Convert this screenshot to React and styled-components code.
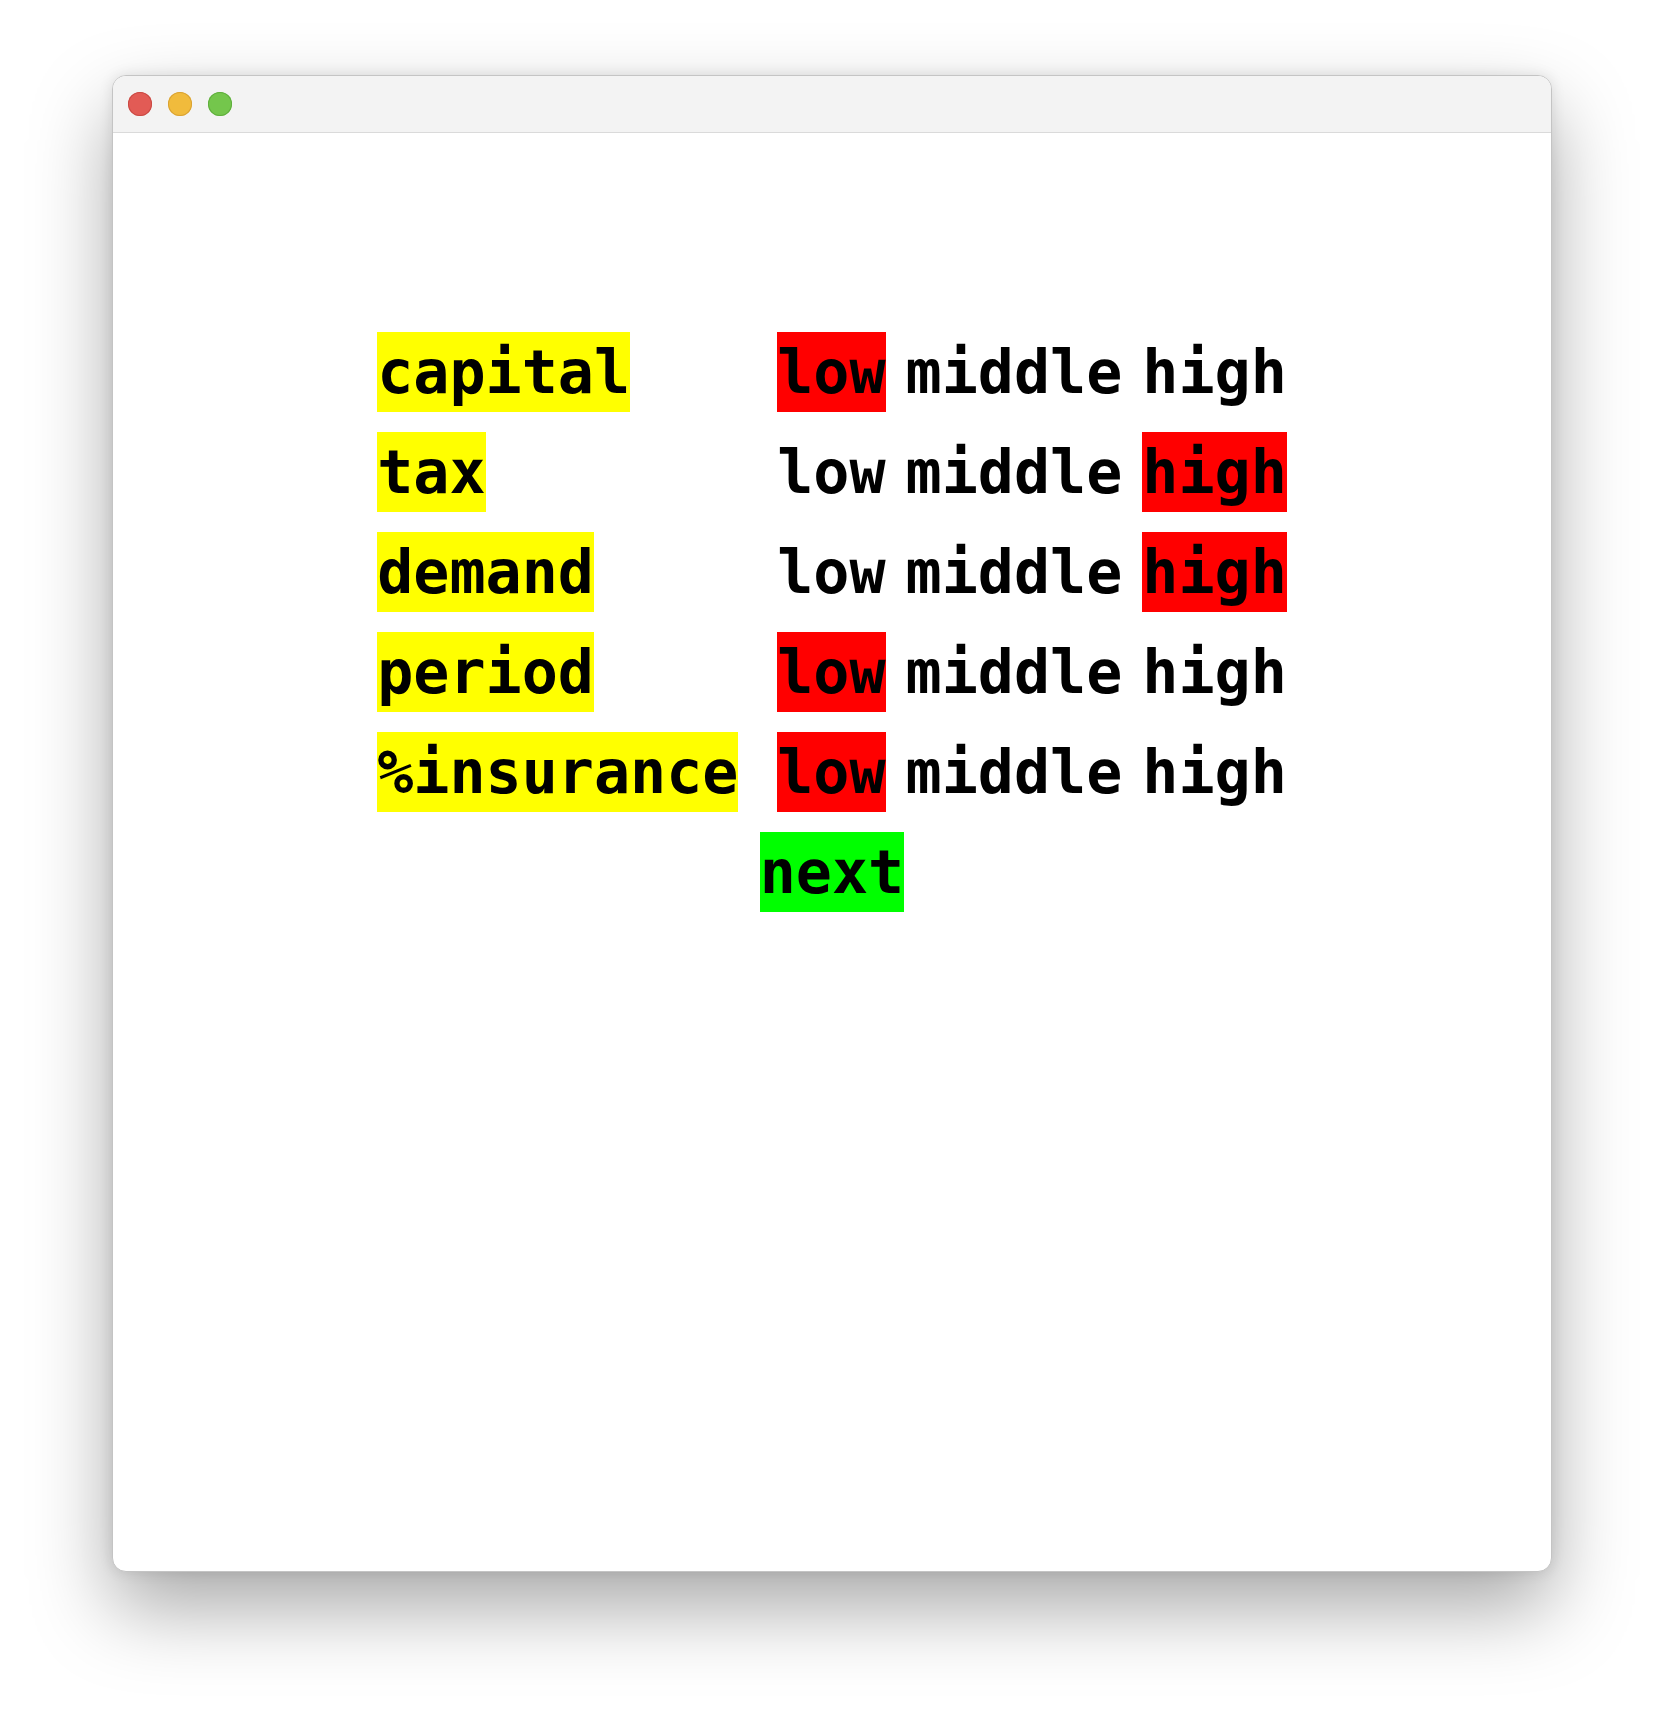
import styled, { createGlobalStyle } from "styled-components";

const GlobalStyle = createGlobalStyle`
  html, body {
    margin: 0;
    padding: 0;
    background: #ffffff;
  }
  body {
    padding: 75px 0 148px;
    font-family: "DejaVu Sans Mono", "Liberation Mono", monospace;
  }
`;

const settings = [
  { name: "capital", value: "low" },
  { name: "tax", value: "high" },
  { name: "demand", value: "high" },
  { name: "period", value: "low" },
  { name: "%insurance", value: "low" },
];

const levels = ["low", "middle", "high"];

export default function App() {
  return (
    <>
      <GlobalStyle />
      <Window>
        <TitleBar>
          <Light color="#e25b55" edge="#c94a44" />
          <Light color="#f1bb3c" edge="#d9a233" />
          <Light color="#74c64c" edge="#5fae3d" />
        </TitleBar>
        <Content>
          <Form>
            {settings.map((s) => (
              <Row key={s.name}>
                <Label>{s.name}</Label>
                <Options>
                  {levels.map((l) => (
                    <Option key={l} selected={l === s.value}>
                      {l}
                    </Option>
                  ))}
                </Options>
              </Row>
            ))}
            <NextRow>
              <NextButton>next</NextButton>
            </NextRow>
          </Form>
        </Content>
      </Window>
    </>
  );
}

const Window = styled.div`
  width: 1440px;
  height: 1497px;
  margin: 0 auto;
  background: #ffffff;
  border-radius: 14px;
  border: 1px solid #c4c4c4;
  box-sizing: border-box;
  overflow: hidden;
  box-shadow: 0 36px 80px rgba(0, 0, 0, 0.34), 0 0 14px rgba(0, 0, 0, 0.1);
  display: flex;
  flex-direction: column;
`;

const TitleBar = styled.div`
  height: 56px;
  flex-shrink: 0;
  background: #f3f3f3;
  border-bottom: 1px solid #dadada;
  display: flex;
  align-items: center;
  gap: 16px;
  padding-left: 15px;
`;

const Light = styled.span`
  width: 24px;
  height: 24px;
  border-radius: 50%;
  background: ${(p) => p.color};
  box-shadow: inset 0 0 0 1px ${(p) => p.edge};
`;

const Content = styled.div`
  flex: 1;
  display: flex;
  justify-content: center;
  padding-top: 199px;
`;

const Form = styled.div`
  display: grid;
  grid-template-columns: 360px auto;
  column-gap: 40px;
  row-gap: 20px;
  align-content: start;
  font-family: "DejaVu Sans Mono", monospace;
  font-weight: bold;
  font-size: 60px;
  line-height: 80px;
  color: #000000;
`;

const Row = styled.div`
  display: contents;
`;

const Label = styled.div`
  justify-self: start;
  background: #ffff00;
  height: 80px;
  white-space: pre;
`;

const Options = styled.div`
  display: flex;
  gap: 20px;
`;

const Option = styled.span`
  height: 80px;
  background: ${(p) => (p.selected ? "#ff0000" : "transparent")};
  white-space: pre;
`;

const NextRow = styled.div`
  grid-column: 1 / -1;
  display: flex;
  justify-content: center;
`;

const NextButton = styled.span`
  height: 80px;
  background: #00ff00;
`;
